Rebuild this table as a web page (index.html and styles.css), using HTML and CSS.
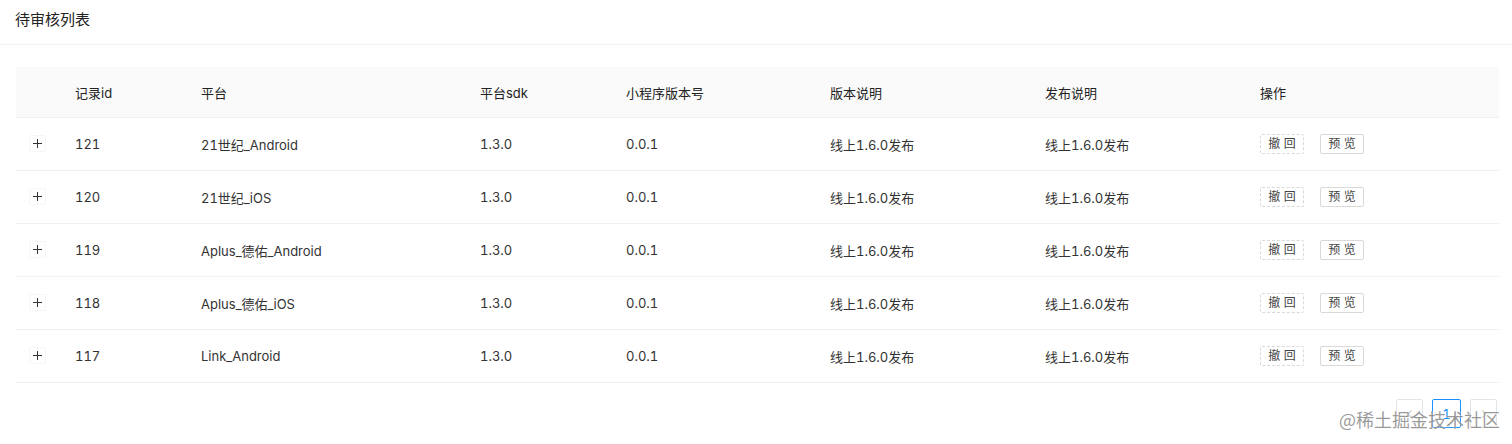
FILE: index.html
```html
<!DOCTYPE html>
<html lang="zh-CN">
<head>
    <meta charset="UTF-8">
    <meta name="viewport" content="width=device-width, initial-scale=1.0">
    <title>待审核列表</title>
    <link rel="stylesheet" href="styles.css">
</head>
<body>

    <div class="page-header">
        <h1>待审核列表</h1>
    </div>

    <div class="table-wrap">
        <table class="audit-table">
            <colgroup>
                <col style="width: 43px">
                <col style="width: 126px">
                <col style="width: 279px">
                <col style="width: 146px">
                <col style="width: 204px">
                <col style="width: 215px">
                <col style="width: 215px">
                <col>
            </colgroup>
            <thead>
                <tr>
                    <th></th>
                    <th>记录id</th>
                    <th>平台</th>
                    <th>平台sdk</th>
                    <th>小程序版本号</th>
                    <th>版本说明</th>
                    <th>发布说明</th>
                    <th>操作</th>
                </tr>
            </thead>
            <tbody id="rows">
            </tbody>
        </table>

        <div class="pagination">
            <span class="page-item disabled">
                <svg width="10" height="10" viewBox="0 0 10 10"><path d="M6.5 1.5 3 5l3.5 3.5" fill="none" stroke="#d0d0d0" stroke-width="1.2"/></svg>
            </span>
            <span class="page-item active">1</span>
            <span class="page-item disabled">
                <svg width="10" height="10" viewBox="0 0 10 10"><path d="M3.5 1.5 7 5 3.5 8.5" fill="none" stroke="#d0d0d0" stroke-width="1.2"/></svg>
            </span>
        </div>
    </div>

    <div class="watermark">@稀土掘金技术社区</div>

    <script>
        const records = [
            { id: 121, platform: '21世纪_Android' },
            { id: 120, platform: '21世纪_iOS' },
            { id: 119, platform: 'Aplus_德佑_Android' },
            { id: 118, platform: 'Aplus_德佑_iOS' },
            { id: 117, platform: 'Link_Android' }
        ];

        function displayRows() {
            const tbody = document.getElementById('rows');
            tbody.innerHTML = '';

            records.forEach((rec) => {
                const tr = document.createElement('tr');
                tr.innerHTML =
                    '<td><span class="expand-icon"></span></td>' +
                    '<td>' + rec.id + '</td>' +
                    '<td>' + rec.platform + '</td>' +
                    '<td>1.3.0</td>' +
                    '<td>0.0.1</td>' +
                    '<td>线上1.6.0发布</td>' +
                    '<td>线上1.6.0发布</td>' +
                    '<td><button class="btn dashed">撤 回</button><button class="btn">预 览</button></td>';
                tbody.appendChild(tr);
            });
        }

        displayRows();
    </script>
</body>
</html>
```

FILE: styles.css
```css
body {
    margin: 0;
    padding: 0;
    background-color: #fff;
    color: #333;
    font-family: Inter, "Noto Sans CJK SC", sans-serif;
    font-size: 13px;
    font-variant-numeric: tabular-nums;
    overflow: hidden;
}

.page-header {
    height: 44px;
    padding: 0 15px;
    border-bottom: 1px solid #f0f0f0;
    display: flex;
    align-items: center;
}

.page-header h1 {
    margin: 0;
    margin-top: -7px;
    font-size: 15px;
    font-weight: 400;
    color: #222;
}

.table-wrap {
    margin: 22px 13px 0 16px;
}

.audit-table {
    width: 100%;
    border-collapse: collapse;
    table-layout: fixed;
}

.audit-table th {
    background-color: #fafafa;
    height: 50px;
    padding: 0 16px;
    text-align: left;
    font-weight: 400;
    color: #222;
    border-bottom: 1px solid #f0f0f0;
}

.audit-table td {
    height: 52px;
    padding: 0 16px;
    color: #333;
    border-bottom: 1px solid #f0f0f0;
    white-space: nowrap;
}

.audit-table td:first-child,
.audit-table th:first-child {
    padding: 0;
    text-align: center;
}

.expand-icon {
    display: inline-block;
    position: relative;
    width: 17px;
    height: 17px;
    vertical-align: middle;
    border: 1px solid #f6f6f6;
    box-sizing: border-box;
    border-radius: 2px;
    margin-top: -2px;
}

.expand-icon::before,
.expand-icon::after {
    content: '';
    position: absolute;
    background-color: #333;
}

.expand-icon::before {
    top: 7px;
    left: 3px;
    width: 9px;
    height: 1px;
}

.expand-icon::after {
    top: 3px;
    left: 7px;
    width: 1px;
    height: 9px;
}

.btn {
    font-family: Inter, "Noto Sans CJK SC", sans-serif;
    font-size: 12px;
    color: #444;
    background-color: #fff;
    border: 1px solid #d9d9d9;
    border-radius: 2px;
    height: 20px;
    width: 44px;
    padding: 0;
    margin-right: 16px;
    cursor: pointer;
    line-height: 18px;
}

.btn.dashed {
    border-style: dashed;
}

.pagination {
    display: flex;
    justify-content: flex-end;
    gap: 9px;
    margin-top: 16px;
    margin-right: 2px;
}

.page-item {
    width: 27px;
    height: 29px;
    box-sizing: border-box;
    border: 1px solid #e4e4e4;
    border-radius: 2px;
    display: flex;
    align-items: center;
    justify-content: center;
    font-size: 13px;
}

.page-item.active {
    border-color: #1890ff;
    color: #1890ff;
    width: 29px;
}

.watermark {
    position: absolute;
    right: 12px;
    bottom: 12px;
    font-size: 18px;
    color: rgba(120, 120, 120, 0.75);
    text-shadow: 0 0 2px #fff;
    font-family: "Noto Sans CJK SC", sans-serif;
    pointer-events: none;
}
```
